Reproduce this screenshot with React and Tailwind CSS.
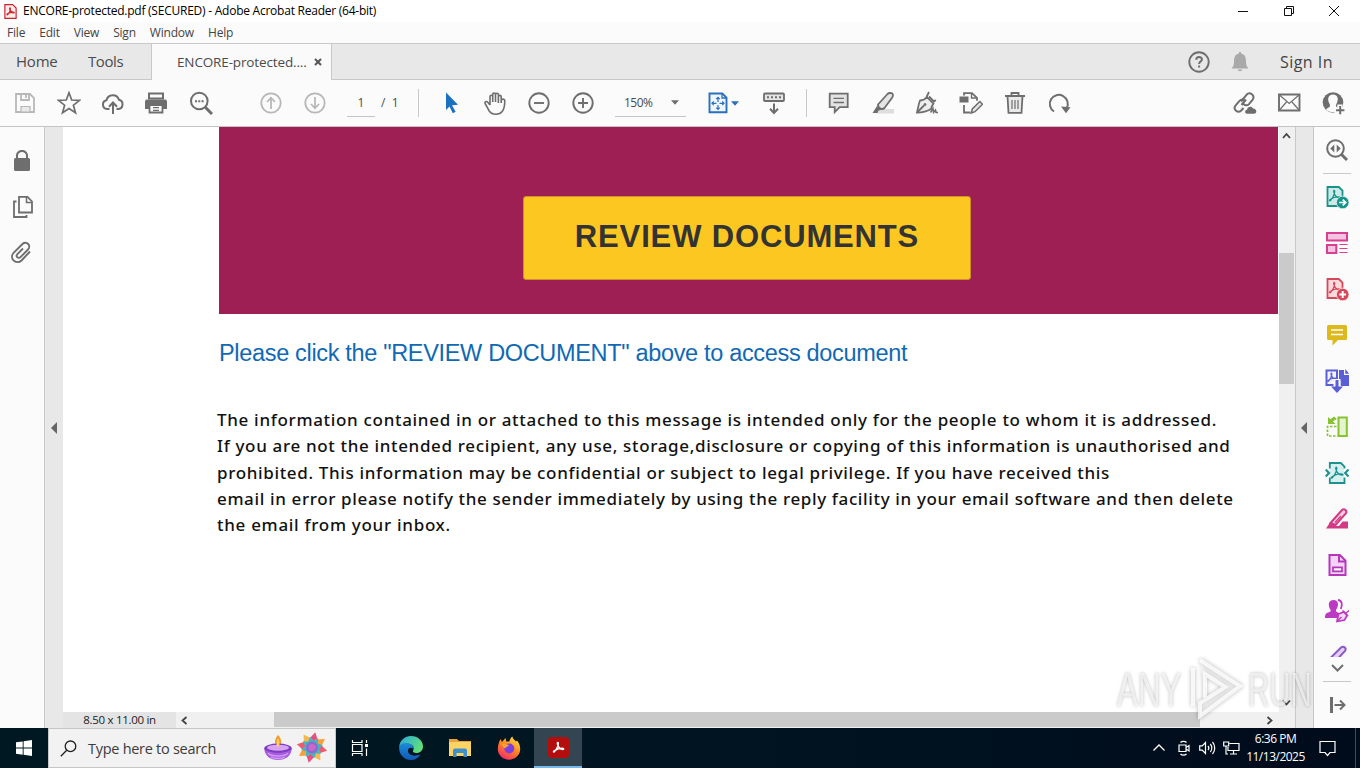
import React from "react";

const GRAY = "#6e6e6e";
const LIGHT = "#b8b8b8";

function Svg({ size = 24, stroke = GRAY, sw = 1.8, fill = "none", children, className = "" }) {
  return (
    <svg
      width={size}
      height={size}
      viewBox="0 0 24 24"
      fill={fill}
      stroke={stroke}
      strokeWidth={sw}
      className={"shrink-0 " + className}
    >
      {children}
    </svg>
  );
}

// Curved three-armed Acrobat mark, drawn around the middle of a 24px box
function AcrobatMark({ stroke, sw = 1.3 }) {
  return (
    <path
      d="M6.5 17c2-1 5-5 5.300-9.500C11.800 5.500 10.300 6 10.800 8c.8 3 3.200 5.800 6.200 6.200 1.500 0 1.200-1.300-1-1.300-3.500 0-7 1.300-9.300 3.200-1 1 .2 1.600 1 .4"
      fill="none"
      stroke={stroke}
      strokeWidth={sw}
      strokeLinecap="round"
    />
  );
}

/* ---------- toolbar icons ---------- */

const SaveIcon = () => (
  <Svg stroke={LIGHT}>
    <path d="M3 3h14l4 4v14H3z" />
    <path d="M8 3v6h8V3M13 4v3" />
    <path d="M8 21v-5.500h9V21z" fill="#e9e9e9" strokeWidth="1.200" />
  </Svg>
);

const StarIcon = () => (
  <Svg sw={1.7}>
    <path d="M12 1.700l2.700 7.300 7.800.3-6.100 4.900 2.100 7.600L12 17.500l-6.500 4.300 2.100-7.600L1.500 9.300l7.800-.3z" />
  </Svg>
);

const CloudIcon = () => (
  <Svg sw={2}>
    <path d="M8.500 18H6a4.400 4.400 0 0 1-.5-8.700A6.500 6.500 0 0 1 18 8.800a4.700 4.700 0 0 1-.5 9.200h-2" />
    <path d="M12 23V12M8 15.700l4-4.200 4 4.200" />
  </Svg>
);

const PrintIcon = () => (
  <Svg stroke="none" fill={GRAY} className="-ml-[2px]">
    <path d="M5 2.500h14v5H5z" fill="#fbfbfb" stroke={GRAY} strokeWidth="2" />
    <path d="M3 8.500h18a2 2 0 0 1 2 2V18H1v-7.500a2 2 0 0 1 2-2z" />
    <path d="M5.500 14h13v7.500h-13z" fill="#fbfbfb" stroke={GRAY} strokeWidth="1.800" />
    <path d="M9 16h6v1.300H9zM9 18.700h6V20H9z" />
  </Svg>
);

const FindIcon = () => (
  <Svg sw={2}>
    <circle cx="10.300" cy="10" r="8.300" />
    <path d="M16.300 16.300L23 23" strokeWidth="3" />
    <path d="M6 9.200h2v2H6zM9.300 9.200h2v2h-2zM12.600 9.200h2v2h-2z" fill={GRAY} stroke="none" />
  </Svg>
);

const UpIcon = () => (
  <Svg stroke={LIGHT}>
    <circle cx="12" cy="12" r="9.700" />
    <path d="M12 18V7M8 11l4-4.300 4 4.300" />
  </Svg>
);

const DownIcon = () => (
  <Svg stroke={LIGHT}>
    <circle cx="12" cy="12" r="9.700" />
    <path d="M12 6v11M8 13l4 4.300 4-4.300" />
  </Svg>
);

const CursorIcon = () => (
  <Svg fill="#1c70c0" stroke="none">
    <path d="M7 1.500l12 12.300-6 .4 3.600 6.600-2.800 1.500-3.300-6.900L7 19z" />
  </Svg>
);

const HandIcon = () => (
  <Svg sw={1.6}>
    <path
      d="M7 14V5.800c0-2 2.700-2 2.700 0V11M9.700 11V3.600c0-2 2.800-2 2.800 0V11M12.500 11V3.800c0-2 2.900-2 2.900 0V11.500M15.400 12V5.800c0-1.900 2.800-1.900 2.800 0V12M18.200 9.500c.2-1.900 3.600-1.900 3.600.2 0 5.800-.6 8.300-2.600 10.800-1.400 1.900-3.400 2.700-6.200 2.700-3.200 0-5.300-1-6.800-3.200-1.500-2.400-2.500-5-4-7.300-1-2 1.400-2.800 2.600-1.500L7 14"
      strokeLinejoin="round"
    />
  </Svg>
);

const MinusIcon = () => (
  <Svg sw={1.9}>
    <circle cx="12" cy="12" r="9.700" />
    <path d="M7 12h10" />
  </Svg>
);

const PlusIcon = () => (
  <Svg sw={1.9}>
    <circle cx="12" cy="12" r="9.700" />
    <path d="M7 12h10M12 7v10" />
  </Svg>
);

const FitIcon = () => (
  <Svg stroke="#2a70bd" sw={1.9}>
    <path d="M3.500 2.500h12.800L20.500 6.700v14.500h-17z" fill="#eff6fd" />
    <path d="M16 2.500V7h4.500" strokeWidth="1.300" />
    <path
      d="M12 6.500V11M12 14v4.500M6 12.300h4.500M13.500 12.300H18M10.200 8.200L12 6.400l1.800 1.800M10.200 16.600l1.800 1.900 1.800-1.900M7.800 10.500L6 12.300l1.800 1.800M16.200 10.500l1.800 1.800-1.800 1.800"
      strokeWidth="1.200"
    />
  </Svg>
);

const ScrollModeIcon = () => (
  <Svg>
    <rect x="2" y="2.500" width="20" height="7.500" rx="1" fill="#e4e4e4" />
    <path d="M5 6.200h14" strokeDasharray="2 2" strokeWidth="2" />
    <path d="M12 12.500V22M8 17.800l4 4.200 4-4.200" strokeWidth="2" />
  </Svg>
);

const CommentIcon = () => (
  <Svg>
    <path d="M2.700 2.700h18v13.500h-8l-5 5v-5h-5z" fill="#e3e3e3" />
    <path d="M6.500 7.300h10.500M6.500 11.500h10.500" strokeWidth="1.300" />
  </Svg>
);

const MarkerIcon = () => (
  <Svg sw={1.8}>
    <path d="M11 18h12v4.500H5z" fill="#dedede" stroke="none" />
    <path d="M7 13.500L16.500 3c1.200-1.200 2.500-1.200 4-.8 1.600.6 1.800 2.200.9 4L13.500 17c-1.200 1.200-2.600 1.200-4 .6-1.700-.7-2.600-2-2.500-4.100z" fill="#e5e5e5" />
    <path d="M6 15l5 3.500-3.500 1.200L6.500 22H1.500z" fill={GRAY} stroke="none" />
  </Svg>
);

const SignIcon = () => (
  <Svg sw={1.8}>
    <path d="M2 21.500C3 17.500 3.500 13 5 9.500c3-.2 5.500-1.500 7-3.500l6.500 6.500c-1.500 2-2 3.500-2.500 5.500-4 2.500-9 3.500-14 3.500z" fill="#ededed" />
    <path d="M11.500 6L14 1M14 5.500l5 5 1.800-1.500M2.500 21l6.500-6.500" />
    <circle cx="10" cy="13.500" r="1" fill={GRAY} strokeWidth="1" />
    <path d="M15.500 21.500l2.500-4 .5 4 2-2.500.5 2.500h2" strokeWidth="1.500" />
  </Svg>
);

const EditPageIcon = () => (
  <Svg>
    <path d="M.5 5.500h9v6h-9z" fill={GRAY} stroke="none" />
    <path d="M5 4.500V2.200h8l5 4.600v3M5 14v7.500h6.500" />
    <path d="M12.500 2.500V7h5" strokeWidth="1.400" />
    <path d="M12.300 22l1-4 7.500-7.500 2.700 2.700-7.500 7.500z" fill="#e5e5e5" strokeWidth="1.500" />
  </Svg>
);

const TrashIcon = () => (
  <Svg>
    <path d="M4.500 5.200l1 16.600h13l1-16.600" fill="#e9e9e9" />
    <path d="M2 5h20M8.500 4.500V2h7v2.500" />
    <path d="M9 9v9M12 9v9M15 9v9" strokeWidth="1.200" />
  </Svg>
);

const RotateIcon = () => (
  <Svg sw={2}>
    <path d="M7 20.500A9 9 0 1 1 19.800 17" />
    <path d="M14 15.500l9.500.7-4.500 6z" fill={GRAY} stroke="none" />
  </Svg>
);

const LinkCloudIcon = () => (
  <Svg sw={2}>
    <path d="M8 10.500l5.500-6.700c3.500-3.800 9 .8 6 5l-3.500 4.300c-1.800 1.800-4.500 1.500-5.500-.3" />
    <path d="M11.500 9.500c-1.500-1.300-3.600-1-5 .4L2.500 14.500c-2.800 4 2.300 8.200 5.700 5L10.500 17M8.500 14l4.500-5.500" />
    <path d="M14 22.700c-2.500 0-2.600-3.700 0-4 .3-3.600 5.200-4 6-1.200 4-.2 4.500 5.200 1 5.200z" fill={GRAY} stroke="none" />
  </Svg>
);

const MailIcon = () => (
  <Svg sw={1.900}>
    <path d="M2 3.500h20.500v16H2z" />
    <path d="M2.500 4l9.700 8.500L22 4M2.500 19l7-8M22 19l-7-8" strokeWidth="1.200" />
  </Svg>
);

const AddUserIcon = () => (
  <Svg stroke="none" fill={GRAY}>
    <circle cx="12" cy="11.500" r="10.300" />
    <path
      d="M12 3.500c4.500 0 5.700 4 4.200 7.800-.8 2-1.500 2.800-1.200 4 .4 1.200 3 1.500 4 3.200-1.500 2-4 2.700-7 2.700s-5.500-.7-7-2.700c1-1.700 3.600-2 4-3.200.3-1.200-.4-2-1.200-4C6.300 7.500 7.500 3.500 12 3.500z"
      fill="#fbfbfb"
    />
    <path d="M16.300 13.500h5.200v3.200h3v5.500h-3V24h-5.200v-2h-2.800v-5h2.800z" fill="#fbfbfb" />
    <path d="M18.200 15h2v3.200h3.200v2h-3.200v3h-2v-3H15v-2h3.200z" />
  </Svg>
);

/* ---------- right rail icons ---------- */

const RailSearch = () => (
  <Svg sw={2}>
    <circle cx="10.500" cy="10.500" r="8.300" />
    <path d="M16.300 16.300L22 22" strokeWidth="3" />
    <path d="M9.300 6.500v8l-4-4zM11.700 6.500v8l4-4z" fill={GRAY} stroke="none" />
  </Svg>
);

const ExportPdf = () => (
  <Svg stroke="#17938a">
    <path d="M2.500 2h11.300l3.700 3.700V21h-15z" fill="#cdeae8" />
    <g transform="translate(-1.500 -.5) scale(.95)"><AcrobatMark stroke="#17938a" /></g>
    <circle cx="17.700" cy="17.500" r="6.300" fill="#17938a" stroke="#fafafa" strokeWidth=".7" />
    <path d="M14 17.500h6M17.700 14.700l3 2.800-3 2.800" stroke="#fff" strokeWidth="1.700" />
  </Svg>
);

const OrganizeIcon = () => (
  <Svg stroke="#d53f94" sw={2}>
    <path d="M2 2h20v7.500H2z" fill="#f5c3df" />
    <path d="M2 14h9.300v8H2z" fill="#f5c3df" />
    <path d="M14.500 13.500h8M14.500 17.500h8M14.500 21.500h8" strokeWidth="1.200" />
  </Svg>
);

const CreatePdf = () => (
  <Svg stroke="#d5485a">
    <path d="M2.500 2h11.300l3.700 3.700V21h-15z" fill="#fadada" />
    <g transform="translate(-1.500 -.5) scale(.95)"><AcrobatMark stroke="#d5485a" /></g>
    <circle cx="17.700" cy="17.500" r="6.300" fill="#d5485a" stroke="#fafafa" strokeWidth=".7" />
    <path d="M14.300 17.500h6.800M17.700 14.100v6.800" stroke="#fff" strokeWidth="1.900" />
  </Svg>
);

const NoteIcon = () => (
  <Svg stroke="none" fill="#ddb91d">
    <path d="M3.500 2h17a1.500 1.500 0 0 1 1.500 1.500v12a1.500 1.500 0 0 1-1.500 1.500H13l-5.500 5.500V17h-4A1.500 1.500 0 0 1 2 15.500v-12A1.500 1.500 0 0 1 3.500 2z" />
    <path d="M6 7h12M6 11.500h12" stroke="#fff" strokeWidth="1.700" />
  </Svg>
);

const CombineIcon = () => (
  <Svg stroke="#5b5fd6" sw={2}>
    <path d="M7 16H1.500V1.500H12V16z" fill="#f3f3fd" />
    <g transform="translate(-2 -.5) scale(.75)"><AcrobatMark stroke="#5b5fd6" sw={1.700} /></g>
    <path d="M14 1h5v5h5v11h-8.500v-5H14z" fill="#5b5fd6" stroke="none" />
    <path d="M20.200 0L24.200 4.800h-4z" fill="#5b5fd6" stroke="none" />
    <path d="M8.500 10h7v7h-7z" fill="#fbfbfb" stroke="none" />
    <path d="M12 11v8" strokeWidth="3" />
    <path d="M6 17.500h12L12 24z" fill="#5b5fd6" stroke="none" />
  </Svg>
);

const SplitIcon = () => (
  <Svg stroke="#86c232" sw={2}>
    <path d="M13.500 2.500h8.300v18.500h-8.300z" fill="#e6f4d2" />
    <path d="M11.500 11.500H2.500v9.500h10" strokeDasharray="2.500 1.500" strokeWidth="1.700" />
    <path d="M3 2v7h7.500l-2.700-2.700L12 4l-3-2.500-3.500 2.700z" fill="#86c232" stroke="none" />
  </Svg>
);

const CompressIcon = () => (
  <Svg stroke="#1f9090">
    <path d="M5 8V2.500h10.500L19 6v15.500H5z" fill="#d5f0ef" stroke="none" />
    <path d="M4.800 7.500V2h11L19.500 5.700v1.800M4.800 16.500V22h14.700v-5.500" />
    <path d="M.7 8.500L4 12 .7 15.500M23.500 8.500L20.200 12l3.300 3.500" strokeWidth="2.200" />
    <AcrobatMark stroke="#1f9090" />
  </Svg>
);

const RedactIcon = () => (
  <Svg stroke="#d43a83" sw={2}>
    <path d="M5.500 16L17 3c2-2 5.500.5 4 3.200L10.500 18z" fill="#f8cfe1" />
    <path d="M5 15.500l6 3.500h3l3.500-4.500h5.500V21.500H1z" fill="#d43a83" stroke="none" />
    <path d="M10 15.500l6-6.500" strokeWidth="1.300" />
  </Svg>
);

const FormIcon = () => (
  <Svg stroke="#b637bb" sw={2}>
    <path d="M4.500 2h10.300l5.700 5.700V22h-16z" fill="#f3d4f7" />
    <path d="M14 2v6.500h6" />
    <path d="M8 14.300h9v4H8z" fill="#fafafa" strokeWidth="1.700" />
  </Svg>
);

const SignRequestIcon = () => (
  <Svg stroke="none" fill="#bb3ac4">
    <path d="M8.500 1c5.500 0 5.500 6 2.700 9.500-.6 1-.3 2 1 2.700l1.800.8-2 5H0c0-4 1-5 4.500-6 1.500-.5 1.600-1.500.8-2.500C3 6.500 3 1 8.500 1z" />
    <path d="M13 1c4.200.4 4.700 5 2.700 9" fill="none" stroke="#bb3ac4" strokeWidth="1.800" />
    <path d="M12 22.500l1.500-7.500 5.500-2 3 3.500-2.500 4.500z" fill="#f5daf8" stroke="#bb3ac4" strokeWidth="1.700" />
    <path d="M17.500 11.500l5.500 5.500M21 14l3-2.500M12.500 22l4-4" stroke="#bb3ac4" strokeWidth="1.500" />
  </Svg>
);

const MoreToolIcon = () => (
  <svg width="24" height="12" viewBox="0 0 24 12" fill="#e4cdf7" stroke="#8a5bc5" strokeWidth="2">
    <path d="M5.500 13L16 2.500c2.500-2 6 .5 4 3.500L12.500 14" />
  </svg>
);

/* ---------- data ---------- */

const menus = ["File", "Edit", "View", "Sign", "Window", "Help"];

const fileTools = [SaveIcon, StarIcon, CloudIcon, PrintIcon, FindIcon];
const zoomTools = [CursorIcon, HandIcon, MinusIcon, PlusIcon];
const editTools = [CommentIcon, MarkerIcon, SignIcon, EditPageIcon, TrashIcon, RotateIcon];
const shareTools = [LinkCloudIcon, MailIcon, AddUserIcon];
const railTools = [
  ExportPdf,
  OrganizeIcon,
  CreatePdf,
  NoteIcon,
  CombineIcon,
  SplitIcon,
  CompressIcon,
  RedactIcon,
  FormIcon,
  SignRequestIcon,
];

const disclaimer = [
  { text: "The information contained in or attached to this message is intended only for the people to whom it is addressed.", cls: "tracking-[0.68px]" },
  { text: "If you are not the intended recipient, any use, storage,disclosure or copying of this information is unauthorised and", cls: "tracking-[0.655px]" },
  { text: "prohibited. This information may be confidential or subject to legal privilege. If you have received this", cls: "tracking-[0.65px]" },
  { text: "email in error please notify the sender immediately by using the reply facility in your email software and then delete", cls: "tracking-[0.63px]" },
  { text: "the email from your inbox.", cls: "tracking-[0.7px]" },
];

function ToolButtons({ icons }) {
  return icons.map((Icon, i) => (
    <button key={i} className="w-11 h-full flex items-center justify-center">
      <Icon />
    </button>
  ));
}

/* ---------- window ---------- */

function TitleBar() {
  return (
    <div className="h-[22px] bg-white flex items-center pl-[3px] text-black">
      <Svg size={15} stroke="#c8252c" sw={1.900} className="mr-[5px]">
        <path d="M3 1h12.500l5.500 5.500V23H3z" fill="#fdeaea" />
        <AcrobatMark stroke="#c8252c" sw={2} />
      </Svg>
      <span className="text-[12px] tracking-[-0.24px] whitespace-nowrap">
        ENCORE-protected.pdf (SECURED) - Adobe Acrobat Reader (64-bit)
      </span>
      <div className="ml-auto flex">
        {["M1 6.500h10", "M1.500 3.500h7v7h-7zM3.500 3.500v-2h7v7h-2", "M1 1l10 10M11 1L1 11"].map((d) => (
          <button key={d} className="w-[45.500px] flex justify-center">
            <svg width="12" height="12" viewBox="0 0 12 12" fill="none" stroke="#111">
              <path d={d} />
            </svg>
          </button>
        ))}
        <span className="w-[3px]" />
      </div>
    </div>
  );
}

function TabBar() {
  return (
    <div className="h-[37px] bg-[#e8e8e8] border-y border-[#c8c8c8] flex items-stretch text-[#4b4b4b]">
      <div className="w-[151px] flex items-center pl-4 text-[15px]">
        <span className="w-[72px] tracking-[-0.2px]">Home</span>
        <span className="tracking-[-0.4px]">Tools</span>
      </div>
      <div className="w-[181px] h-[36px] bg-[#fafafa] border-x border-[#c8c8c8] flex items-center pl-[25px]">
        <span className="text-[13.500px] w-[137px] tracking-[-0.14px]">ENCORE-protected....</span>
        <svg width="8" height="8" viewBox="0 0 8 8" stroke="#555" strokeWidth="2">
          <path d="M1 1l6 6M7 1L1 7" />
        </svg>
      </div>
      <div className="ml-auto flex items-center pr-[25px]">
        <Svg className="mr-[17.500px]" sw={1.900}>
          <circle cx="12" cy="12" r="9.700" />
          <path d="M9.300 9.700c0-3.600 5.600-3.400 5.600-.3 0 2.100-2.800 2.200-2.800 4.500M12.100 15.500v2" strokeWidth="2" />
        </Svg>
        <Svg className="mr-[28px]" stroke="none" fill="#a9a9a9">
          <path d="M11 2h2v1.500c4 .7 5 4 5 8.500 0 3 .8 4.500 2.500 6.500h-17C5.200 16.500 6 15 6 12c0-4.500 1-7.800 5-8.500zM9.500 19.500h5c-.5 2.300-4.500 2.300-5 0z" />
        </Svg>
        <span className="w-[55px] text-[16px] font-medium tracking-[0.45px] text-[#444] whitespace-nowrap">Sign In</span>
      </div>
    </div>
  );
}

function Toolbar() {
  return (
    <div className="h-[47px] bg-[#fbfbfb] border-b border-[#c4c4c4] flex items-center pl-[3px] pr-[5px] text-[#4b4b4b] text-[12px]">
      <ToolButtons icons={fileTools} />
      <div className="w-[26px]" />
      <ToolButtons icons={[UpIcon, DownIcon]} />
      <div className="ml-[10px] w-[28px] h-[27px] border-b border-[#c4c4c4] flex items-center justify-center">1</div>
      <span className="w-[43px] pl-[6px]">/&nbsp; 1</span>
      <div className="w-px h-[28px] bg-[#c8c8c8] mr-[10px]" />
      <ToolButtons icons={zoomTools} />
      <div className="ml-[10px] w-[71px] h-[27px] border-b border-[#c4c4c4] flex items-center justify-between pl-[9px] pr-[7px]">
        <span className="tracking-[-0.5px]">150%</span>
        <svg width="8" height="5" viewBox="0 0 9 5" fill="#6e6e6e"><path d="M0 0h9L4.500 5z" /></svg>
      </div>
      <div className="ml-[20px] flex items-center">
        <FitIcon />
        <svg className="ml-px" width="8" height="5" viewBox="0 0 9 5" fill="#2a70bd"><path d="M0 0h9L4.500 5z" /></svg>
      </div>
      <div className="ml-[13px] flex"><ToolButtons icons={[ScrollModeIcon]} /></div>
      <div className="w-px h-[28px] bg-[#c8c8c8] ml-[10px] mr-[10px]" />
      <ToolButtons icons={editTools} />
      <div className="ml-auto flex"><ToolButtons icons={shareTools} /></div>
    </div>
  );
}

function LeftRail() {
  return (
    <>
      <div className="w-[45px] bg-[#fbfbfb] border-r border-[#c8c8c8] flex flex-col items-center pt-[21px] gap-[22px]">
        <Svg stroke="none" fill={GRAY} className="-ml-px">
          <path d="M6 10V7.500C6 0 18 0 18 7.500V10h.5a1.500 1.500 0 0 1 1.500 1.500v10a1.500 1.500 0 0 1-1.500 1.500h-13A1.500 1.500 0 0 1 4 21.500v-10A1.500 1.500 0 0 1 5.500 10zM8 10h8V7.500c0-4.800-8-4.800-8 0z" fillRule="evenodd" />
        </Svg>
        <Svg className="ml-[2px] mt-px -mb-px">
          <path d="M8 1.800h8.500L21 6.500V17.500H8z" />
          <path d="M15.500 2v5.500h5.300" strokeWidth="1.500" />
          <path d="M5.500 6.500H3v15.500h12.500V20" />
        </Svg>
        <Svg className="-ml-[2px]" sw={1.900}>
          <path d="M21 11.500l-8.500 9c-2.500 2.500-6 2-8-.2-2-2.200-2-5.300.3-7.600L13.500 4c1.600-1.600 4.200-1.600 5.700 0s1.300 4-.2 5.500l-7.500 7.700c-1 1-2.600.9-3.300 0-.8-.9-.7-2.200.2-3.100L14 8.500" />
        </Svg>
      </div>
      <div className="w-[18px] bg-[#e8e8e8] flex items-center justify-center">
        <svg width="6" height="12" viewBox="0 0 6 12" fill="#666"><path d="M6 0v12L0 6z" /></svg>
      </div>
    </>
  );
}

function Page() {
  return (
    <div className="flex-1 bg-white overflow-hidden pl-[154px]">
      <div className="ml-[2px] h-[187px] bg-[#9e1f54] flex pl-[305px] pt-[69px]">
        <button className="w-[448px] h-[84px] -ml-px pb-[3px] rounded-[3px] bg-[#fdc722] border border-[#cf8f2c] flex items-center justify-center font-['Liberation_Sans'] font-bold text-[31px] leading-none tracking-[0.85px] text-[#333] whitespace-nowrap">
          REVIEW DOCUMENTS
        </button>
      </div>
      <p className="ml-[2px] mt-[24px] h-[30px] leading-[30px] font-['Liberation_Sans'] text-[23.500px] tracking-[-0.33px] text-[#0f69b4] whitespace-nowrap">
        Please click the "REVIEW DOCUMENT" above to access document
      </p>
      <div className="mt-[39px] font-['Noto_Sans'] text-[17px] font-medium leading-[26.250px] text-[#111] whitespace-nowrap">
        {disclaimer.map((l) => (
          <div key={l.text} className={l.cls}>{l.text}</div>
        ))}
      </div>
    </div>
  );
}

const chevrons = {
  up: "M1 6l3.500-4L8 6",
  down: "M1 2.500l3.500 4 3.500-4",
  left: "M6.500 1L2.500 4.500l4 3.500",
  right: "M2.500 1l4 3.500-4 3.500",
};

function Chevron({ dir }) {
  return (
    <svg width="9" height="9" viewBox="0 0 9 9" fill="none" stroke="#444" strokeWidth="1.800">
      <path d={chevrons[dir]} />
    </svg>
  );
}

function DocumentPane() {
  return (
    <div className="flex-1 flex flex-col min-w-0">
      <div className="flex-1 flex min-h-0">
        <Page />
        <div className="w-[17px] bg-[#f0f0f0] border-l border-white pr-px flex flex-col items-center pt-[5px] pb-[5px]">
          <Chevron dir="up" />
          <div className="w-[15px] h-[131px] bg-[#cacaca] mt-[112px]" />
          <div className="mt-auto"><Chevron dir="down" /></div>
        </div>
      </div>
      <div className="h-4 bg-[#f0f0f0] flex text-[11.500px] text-[#222]">
        <div className="w-[113px] bg-[#e4e4e4] flex items-center justify-center tracking-[-0.3px]">8.50 x 11.00 in</div>
        <div className="w-[98px] pl-[4px] flex items-center"><Chevron dir="left" /></div>
        <div className="w-[926px] h-[15px] bg-[#cacaca]" />
        <div className="flex-1 flex items-center pl-[65px]"><Chevron dir="right" /></div>
      </div>
    </div>
  );
}

function RightRail() {
  return (
    <>
      <div className="w-[19px] bg-[#e8e8e8] border-x border-[#c8c8c8] flex items-center justify-center pr-[2px]">
        <svg width="6" height="12" viewBox="0 0 6 12" fill="#666"><path d="M6 0v12L0 6z" /></svg>
      </div>
      <div className="w-[46px] bg-[#fbfbfb] flex flex-col items-center">
        <div className="h-[47px] w-7 border-b border-[#c8c8c8] flex items-center justify-center"><RailSearch /></div>
        <div className="flex flex-col items-center">
          {railTools.map((Icon, i) => (
            <div key={i} className="h-[46px] flex items-center"><Icon /></div>
          ))}
        </div>
        <div className="mt-[11px]"><MoreToolIcon /></div>
        <svg className="mt-[7px]" width="13" height="8" viewBox="0 0 13 8" fill="none" stroke={GRAY} strokeWidth="2">
          <path d="M1 1l5.500 5.500L12 1" />
        </svg>
        <div className="mt-[9px] w-7 h-px bg-[#c8c8c8]" />
        <Svg className="mt-[11px] ml-[4px]" sw={2}>
          <path d="M4.500 4v16" strokeWidth="3" />
          <path d="M7.500 12H17M13 7.500l4.500 4.500-4.500 4.500" />
        </Svg>
      </div>
    </>
  );
}

/* ---------- taskbar ---------- */

const petalColors = ["#e94f7c", "#f6a23c", "#ee5a6e", "#f8b84e", "#e94f7c", "#f6a23c", "#ee5a6e", "#f8b84e"];

function SearchArt() {
  return (
    <svg width="66" height="32" viewBox="0 0 66 32">
      <path d="M15 3c4 4 4.500 10 0 11-4.500-1-3.500-7 0-11z" fill="#f29a2e" />
      <ellipse cx="15" cy="16.500" rx="13.800" ry="5" fill="#7d3cc4" />
      <ellipse cx="15" cy="15.700" rx="11" ry="3" fill="#d9a5f0" />
      <path d="M15 6c2 3 2 8 0 9-2-1-2-6 0-9z" fill="#ffcf57" />
      <path d="M1.200 17c1 7 6 11 13.800 11s12.800-4 13.800-11c-4 5-23.600 5-27.600 0z" fill="#a65be0" />
      <path d="M5 21c3 4 17 4 20 0M8 25c3 2 11 2 14 0" stroke="#cf9bf3" strokeWidth="1.400" fill="none" />
      <g transform="translate(49 15.500) rotate(12)">
        {petalColors.map((c, i) => (
          <path key={i} d="M0-15.500L5-7 0 0-5-7z" fill={c} transform={`rotate(${i * 45})`} />
        ))}
        {petalColors.map((c, i) => (
          <path key={i} d="M0-11L3.500-5 0 0-3.500-5z" fill="#45b5c4" transform={`rotate(${i * 45 + 22})`} />
        ))}
        <circle r="6" fill="#8a6bd0" />
        <circle r="3.500" fill="#c968c8" />
      </g>
    </svg>
  );
}

function EdgeIcon() {
  return (
    <svg width="24" height="24" viewBox="0 0 24 24">
      <defs>
        <linearGradient id="edgeTop" x1="0" y1="0" x2="1" y2=".5">
          <stop offset="0" stopColor="#2aa6e0" />
          <stop offset="1" stopColor="#5fe07c" />
        </linearGradient>
        <linearGradient id="edgeLow" x1="0" y1="0" x2="0" y2="1">
          <stop offset="0" stopColor="#1b8ed8" />
          <stop offset="1" stopColor="#1259b8" />
        </linearGradient>
      </defs>
      <path d="M.2 10.500C1 4.500 5.800 0 12 0c7 0 12 5 12 10.500 0 4-3 6.500-6.500 6.500-2.800 0-4.200-1-3.500-2.200 1.500-2 .8-6.800-5-7C5 7.800 1.500 9 .2 10.500z" fill="url(#edgeTop)" />
      <path d="M.2 10.500C1.500 7.500 5 6.500 8 7c4 .5 6.500 3 6.500 6-2-2-4.800-1.500-5.500 1-.8 4 4 7.500 12.500 4.500C19.300 22 16 24 12 24 5 24-.6 18 .2 10.500z" fill="url(#edgeLow)" />
    </svg>
  );
}

function FolderIcon() {
  return (
    <svg width="22" height="20" viewBox="0 0 22 20">
      <path d="M0 1h8l2 2h12v6H0z" fill="#e8a33a" />
      <path d="M0 4h22v14H0z" fill="#fbd463" />
      <path d="M4 19v-6.500a2 2 0 0 1 2-2h10a2 2 0 0 1 2 2V19h-3.500v-4h-7v4z" fill="#3f8fcd" />
    </svg>
  );
}

function FirefoxIcon() {
  return (
    <svg width="24" height="24" viewBox="0 0 24 24">
      <defs>
        <linearGradient id="fox" x1=".8" y1="0" x2=".2" y2="1">
          <stop offset="0" stopColor="#ffe14a" />
          <stop offset=".45" stopColor="#ff8a1f" />
          <stop offset="1" stopColor="#f0246e" />
        </linearGradient>
      </defs>
      <path d="M3.500 3l1.500 3 3.500-4 .8 3.500h3C13 3 14 1.500 15.500.5c0 2.500 2 3 3.500 5l1-1c2.200 2.500 3.200 5.500 3.200 8.500 0 6-5 10.700-11.200 10.700S.8 19 .8 13C.8 9.500 2 5.500 3.500 3z" fill="url(#fox)" />
      <circle cx="12.300" cy="12.500" r="5" fill="#7b3fe0" />
      <path d="M5 8c3-1 5 .5 7 1-1 2-3.500 1.500-3.500 3.500C6.500 12 5.500 10 5 8z" fill="#ffa52b" />
    </svg>
  );
}

function Taskbar() {
  return (
    <div className="h-10 bg-linear-to-r from-[#001822] via-[#001521] to-[#000b1b] flex items-stretch text-white">
      <div className="w-12 flex items-center justify-center">
        <svg width="16" height="16" viewBox="0 0 16 16" fill="#fff">
          <path d="M0 2.300L6.700 1.400v6.200H0zM7.600 1.300L16 0v7.600H7.600zM0 8.500h6.700v6.200L0 13.800zM7.600 8.500H16V16l-8.400-1.200z" />
        </svg>
      </div>
      <div className="w-[288px] bg-[#f2f2f2] border border-[#c6c6c6] flex items-center pl-[11px] text-[#3c3c3c]">
        <svg width="17" height="17" viewBox="0 0 17 17" fill="none" stroke="#222" strokeWidth="1.300">
          <circle cx="10.500" cy="6.300" r="5.300" />
          <path d="M6.700 10.300L.8 16.200" />
        </svg>
        <span className="ml-[11px] pt-px text-[14.500px] tracking-[-0.28px] w-[175px] whitespace-nowrap">Type here to search</span>
        <SearchArt />
      </div>
      <div className="w-12 flex items-center justify-center">
        <svg width="18" height="18" viewBox="0 0 18 18" fill="none" stroke="#fff" strokeWidth="1.200">
          <path d="M1.500 1v2.500h9.500V1M1.500 17v-2.500h9.500V17M1.500 5.500h9.500v7H1.500zM15.500 1v3M15.500 9.500V17" />
          <path d="M14 5h3v3h-3z" fill="#fff" stroke="none" />
        </svg>
      </div>
      <div className="w-[52px] flex items-center justify-center pl-[2px]"><EdgeIcon /></div>
      <div className="w-[48px] flex items-center justify-center"><FolderIcon /></div>
      <div className="w-[50px] flex items-center justify-center"><FirefoxIcon /></div>
      <div className="w-12 bg-[#334550] border-b-2 border-[#76b9ed] flex items-center justify-center">
        <svg width="21" height="21" viewBox="0 0 24 24">
          <rect width="24" height="24" rx="4" fill="#b40d0d" />
          <AcrobatMark stroke="#fff" sw={1.700} />
        </svg>
      </div>
      <div className="ml-auto flex items-center">
        <svg width="12" height="8" viewBox="0 0 12 8" fill="none" stroke="#fff" strokeWidth="1.300"><path d="M.5 6.500L6 1l5.500 5.500" /></svg>
        <svg className="ml-[12px]" width="14" height="16" viewBox="0 0 14 16" fill="none" stroke="#fff" strokeWidth="1.200">
          <path d="M2 5h7v6.500H2zM9 7.500l3-2v5.500l-3-2M3.500 2.500c1.500-1.500 4.500-1.500 6 0M3.500 14c1.500 1.500 4.500 1.500 6 0" />
        </svg>
        <svg className="ml-[8px]" width="17" height="14" viewBox="0 0 17 14" fill="none" stroke="#fff" strokeWidth="1.200">
          <path d="M.7 4.800h2.500L6.500 1.500v11L3.200 9.200H.7zM9 5c1 1.200 1 3 0 4M11.300 3c2 2.200 2 6 0 8M13.500 1c3 3.300 3 8.700 0 12" />
        </svg>
        <svg className="ml-[7px]" width="17" height="14" viewBox="0 0 17 14" fill="none" stroke="#fff" strokeWidth="1.200">
          <path d="M6.500 2.500h9.500v7H5V6M10.500 9.500v3M7 13h7M.7 1h5v4h-5zM3 5v8h2" />
        </svg>
        <div className="ml-[6px] w-[59px] text-[12px] leading-[18px] tracking-[-0.5px] text-center whitespace-nowrap">
          <div>6:36 PM</div>
          <div>11/13/2025</div>
        </div>
        <svg className="ml-[14px]" width="17" height="17" viewBox="0 0 17 17" fill="none" stroke="#fff" strokeWidth="1.200">
          <path d="M1 1.500h15v11H11l-2.500 3-2.500-3H1z" />
        </svg>
        <div className="ml-[19px] w-px h-10 bg-[#3c4a58] mr-[4px]" />
      </div>
    </div>
  );
}

// Translucent logo that floats over the bottom right corner
function Watermark() {
  return (
    <div className="absolute left-[1117px] top-[655px] w-[196px] h-[66px] flex items-center justify-between pointer-events-none font-['Liberation_Sans'] text-[49px] leading-none text-white/65 [text-shadow:0_0_4px_rgba(0,0,0,0.28)]">
      <span className="w-[66px] origin-left scale-x-[0.64] mt-[3px]">ANY</span>
      <svg width="58" height="66" viewBox="0 0 58 66" fill="rgba(255,255,255,.35)" stroke="rgba(255,255,255,.8)" strokeWidth="4" className="shrink-0 drop-shadow-[0_0_2px_rgba(0,0,0,0.35)]">
        <path d="M13 5L53 31 13 61V48L38 32 18 19v24" />
        <path d="M6 13v38" />
      </svg>
      <span className="w-[65px] origin-left scale-x-[0.6] mt-[3px]">RUN</span>
    </div>
  );
}

export default function App() {
  return (
    <div className="relative w-[1360px] h-[768px] overflow-hidden flex flex-col bg-white font-['Open_Sans',sans-serif]">
      <TitleBar />
      <div className="h-[21px] bg-[#fbfbfb] flex items-center pl-[7px] text-[12px] tracking-[-0.2px] text-[#444]">
        {menus.map((m) => (
          <span key={m} className="mr-[14px]">{m}</span>
        ))}
      </div>
      <TabBar />
      <Toolbar />
      <div className="flex-1 flex min-h-0">
        <LeftRail />
        <DocumentPane />
        <RightRail />
      </div>
      <Taskbar />
      <Watermark />
    </div>
  );
}
